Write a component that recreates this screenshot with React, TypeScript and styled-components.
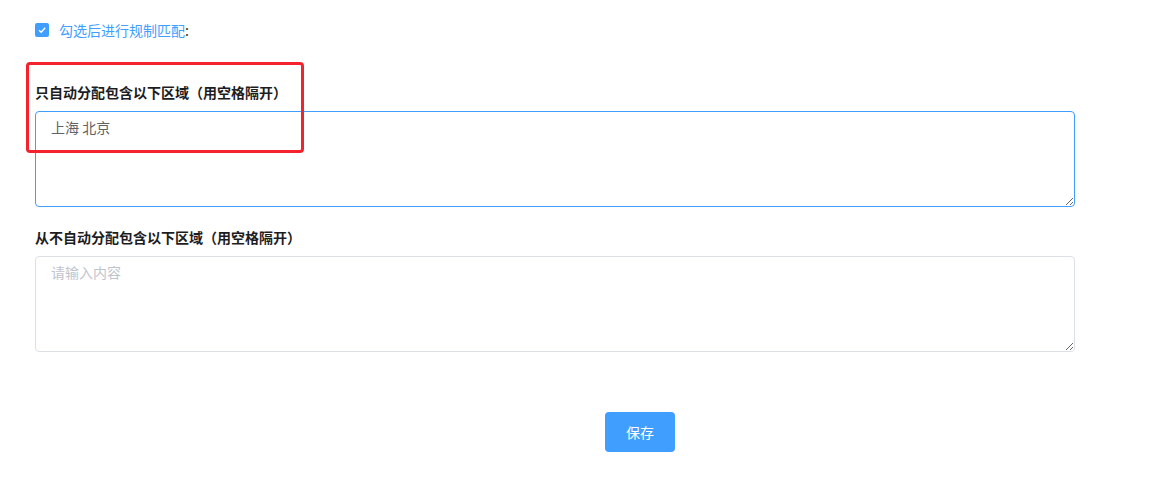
import styled, { createGlobalStyle } from "styled-components";

const GlobalStyle = createGlobalStyle`
  html, body {
    margin: 0;
    padding: 0;
    background: #fff;
    font-family: "Noto Sans CJK SC", "Noto Sans", sans-serif;
  }
`;

const Page = styled.div`
  width: 1040px;
  padding: 20px 0 28px 35px;
`;

const CheckRow = styled.label`
  display: flex;
  align-items: center;
  height: 20px;
  font-size: 14px;
  color: #409eff;
  cursor: pointer;
`;

const CheckBox = styled.span`
  width: 14px;
  height: 14px;
  border-radius: 2px;
  background: #409eff;
  display: flex;
  align-items: center;
  justify-content: center;
  margin-right: 10px;
`;

const Colon = styled.span`
  color: #303133;
`;

const Section = styled.div`
  position: relative;
  margin-top: 42px;
`;

const FieldLabel = styled.div<{ $gap?: number }>`
  font-size: 14px;
  font-weight: 700;
  color: #1d1d1f;
  line-height: 20px;
  margin-top: ${({ $gap }) => $gap ?? 0}px;
  margin-bottom: 9px;
`;

const TextArea = styled.textarea<{ $active?: boolean }>`
  display: block;
  box-sizing: border-box;
  width: 100%;
  height: 96px;
  padding: 5px 15px;
  font-family: inherit;
  font-size: 14px;
  line-height: 1.5;
  color: #606266;
  border: 1px solid ${({ $active }) => ($active ? "#409eff" : "#dcdfe6")};
  border-radius: 4px;
  outline: none;
  resize: vertical;
  &::placeholder {
    color: #c0c4cc;
  }
`;

const Highlight = styled.div`
  position: absolute;
  left: -9px;
  top: -20px;
  width: 278px;
  height: 91px;
  box-sizing: border-box;
  border: 3px solid #f5222d;
  border-radius: 4px;
  pointer-events: none;
`;

const Footer = styled.div`
  margin-top: 60px;
  padding-left: 570px;
`;

const SaveBtn = styled.button`
  width: 70px;
  height: 40px;
  border: none;
  border-radius: 4px;
  background: #409eff;
  color: #fff;
  font-family: inherit;
  font-size: 14px;
  cursor: pointer;
`;

export default function App() {
  return (
    <>
      <GlobalStyle />
      <Page>
        <CheckRow>
          <CheckBox>
            <svg width="10" height="10" viewBox="0 0 10 10">
              <path d="M2 5.2 L4.2 7.2 L8.2 2.8" fill="none" stroke="#fff" strokeWidth="1.4" />
            </svg>
          </CheckBox>
          勾选后进行规制匹配<Colon>:</Colon>
        </CheckRow>

        <Section>
          <FieldLabel>只自动分配包含以下区域（用空格隔开）</FieldLabel>
          <TextArea $active defaultValue="上海 北京" />
          <FieldLabel $gap={20}>从不自动分配包含以下区域（用空格隔开）</FieldLabel>
          <TextArea placeholder="请输入内容" />
          <Highlight />
        </Section>

        <Footer>
          <SaveBtn>保存</SaveBtn>
        </Footer>
      </Page>
    </>
  );
}
